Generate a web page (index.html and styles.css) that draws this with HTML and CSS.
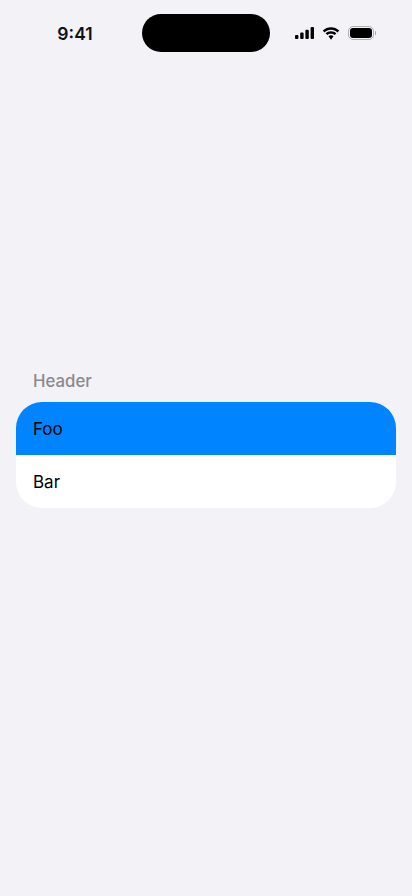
FILE: index.html
```html
<!DOCTYPE html>
<html lang="en">
<head>
    <meta charset="UTF-8">
    <meta name="viewport" content="width=device-width, initial-scale=1.0">
    <title>List</title>
    <link rel="stylesheet" href="styles.css">
</head>
<body>

    <div class="status-bar">
        <div class="status-time">9:41</div>
        <div class="island"></div>
        <div class="status-icons">
            <svg class="icon-signal" width="19" height="12" viewBox="0 0 19 12">
                <rect x="0" y="8" width="3.4" height="4" rx="1" />
                <rect x="5.200" y="5.500" width="3.4" height="6.500" rx="1" />
                <rect x="10.400" y="2.800" width="3.4" height="9.200" rx="1" />
                <rect x="15.600" y="0" width="3.4" height="12" rx="1" />
            </svg>
            <svg class="icon-wifi" width="18" height="13" viewBox="0 0 18 13">
                <path d="M9 2.800c2.500 0 4.800 1 6.500 2.600l1.700-1.800C15 1.400 12.100.2 9 .2S3 1.400.800 3.600l1.700 1.800C4.200 3.800 6.500 2.800 9 2.800z" />
                <path d="M9 6.700c1.400 0 2.700.5 3.700 1.400l1.700-1.800C13 5 11.100 4.200 9 4.200s-4 .8-5.400 2.100l1.700 1.800c1-.9 2.300-1.400 3.700-1.400z" />
                <path d="M9 8.300c-1 0-1.800.3-2.500.9L9 12.800l2.500-3.600c-.7-.6-1.500-.9-2.500-.9z" />
            </svg>
            <div class="battery">
                <div class="battery-body">
                    <div class="battery-level"></div>
                </div>
                <div class="battery-cap"></div>
            </div>
        </div>
    </div>

    <div class="list-section">
        <div class="list-header">Header</div>
        <ul class="list-card">
            <li class="list-row selected">Foo</li>
            <li class="list-row">Bar</li>
        </ul>
    </div>

</body>
</html>
```

FILE: styles.css
```css
* {
    margin: 0;
    padding: 0;
    box-sizing: border-box;
}

html, body {
    height: 100%;
}

body {
    font-family: Inter, Roboto, sans-serif;
    background-color: #f2f2f7;
    color: #000;
    overflow: hidden;
}

.status-bar {
    display: flex;
    align-items: center;
    height: 38px;
    margin-top: 14px;
    position: relative;
}

.status-time {
    width: 150px;
    text-align: center;
    font-size: 17.500px;
    font-weight: 600;
    color: #111;
}

.island {
    position: absolute;
    left: 142px;
    top: 0;
    width: 128px;
    height: 38px;
    border-radius: 19px;
    background-color: #000;
}

.status-icons {
    display: flex;
    align-items: center;
    gap: 8px;
    margin-left: auto;
    margin-right: 36px;
}

.status-icons svg {
    display: block;
    fill: #000;
}

.battery {
    display: flex;
    align-items: center;
}

.battery-body {
    width: 26px;
    height: 13.500px;
    padding: 1px;
    border: 1.500px solid #b0b0b4;
    border-radius: 5px;
}

.battery-level {
    height: 100%;
    border-radius: 3px;
    background-color: #000;
}

.battery-cap {
    width: 1.500px;
    height: 4px;
    margin-left: 1px;
    border-radius: 0 1px 1px 0;
    background-color: #a5a5a9;
}

.list-section {
    margin-top: 318px;
    padding: 0 16px;
}

.list-header {
    padding: 0 17px;
    height: 22px;
    line-height: 22px;
    margin-bottom: 10px;
    font-size: 16.800px;
    font-weight: 550;
    color: #8a8a8e;
}

.list-card {
    list-style: none;
    border-radius: 26px;
    overflow: hidden;
    background-color: #fff;
}

.list-row {
    height: 53px;
    line-height: 55px;
    padding: 0 17px;
    font-size: 17px;
}

.list-row.selected {
    background-color: #0084ff;
}
```
